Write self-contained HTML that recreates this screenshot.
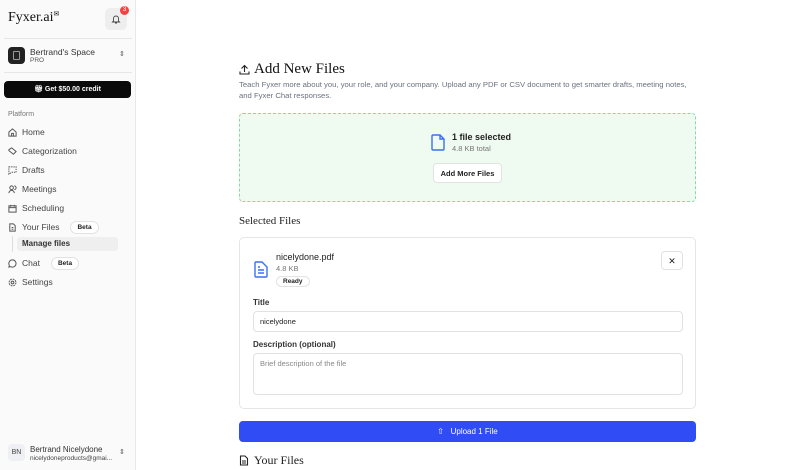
<!DOCTYPE html>
<html><head><style>
*{box-sizing:border-box;margin:0;padding:0}
body{width:800px;height:470px;overflow:hidden;font-family:"Liberation Sans",sans-serif;background:#fff;position:relative;color:#222}
.sb{position:absolute;left:0;top:0;width:136px;height:470px;background:#fafafa;border-right:1px solid #e8e8e8}
.a{position:absolute}
.nav{position:absolute;left:8px;font-size:8.5px;color:#444;display:flex;align-items:center;gap:5px;height:12px}
.nav svg{width:9px;height:9px;fill:none;stroke:#555;stroke-width:1.1}
.badge{font-size:6.5px;font-weight:bold;border:1px solid #e2e2e2;border-radius:8px;padding:2px 6px;background:#fff;color:#222;margin-left:6px}
.serif{font-family:"Liberation Serif",serif}
.lbl{font-size:8px;font-weight:bold;color:#333}
.inp{position:absolute;border:1px solid #e2e2e2;border-radius:4px;background:#fff;font-size:7.5px;padding:0 6px}
</style></head><body>
<div class="sb">
 <div class="a serif" style="left:8px;top:10px;font-size:14px;color:#111">Fyxer.ai<span style="font-size:7px;vertical-align:top">✉</span></div>
 <div class="a" style="left:105px;top:8px;width:22px;height:22px;background:#eee;border-radius:5px"></div>
 <svg class="a" style="left:111px;top:14px" width="10" height="10" viewBox="0 0 10 10"><path d="M2.5 7V4.5a2.5 2.5 0 0 1 5 0V7l1 1h-7zM4 9h2" fill="none" stroke="#444" stroke-width="0.9"/></svg>
 <div class="a" style="left:120px;top:6px;width:9px;height:9px;background:#ef4444;border-radius:50%;color:#fff;font-size:6px;text-align:center;line-height:9px">3</div>
 <div class="a" style="left:4px;top:38px;width:128px;border-top:1px solid #e6e6e6"></div>
 <div class="a" style="left:8px;top:47px;width:17px;height:17px;background:#222;border-radius:4px"></div>
 <div class="a" style="left:13px;top:51px;width:7px;height:9px;border:1px solid #999;border-radius:1px"></div>
 <div class="a" style="left:30px;top:47px;font-size:8.5px;color:#333">Bertrand's Space</div>
 <div class="a" style="left:30px;top:57px;font-size:6.5px;color:#555">PRO</div>
 <div class="a" style="left:119px;top:50px;font-size:7px;color:#555">⇕</div>
 <div class="a" style="left:4px;top:72px;width:128px;border-top:1px solid #e6e6e6"></div>
 <div class="a" style="left:4px;top:81px;width:127px;height:17px;background:#0a0a0a;border-radius:4px;color:#fff;font-size:7px;font-weight:bold;text-align:center;line-height:17px">🎁︎ Get $50.00 credit</div>
 <div class="a" style="left:8px;top:111px;font-size:7px;color:#777">Platform</div>
 <div class="nav" style="top:126px"><svg viewBox="0 0 10 10"><path d="M1 4.5L5 1l4 3.5V9H1zM4 9V6h2v3"/></svg><span>Home</span></div>
 <div class="nav" style="top:145px"><svg viewBox="0 0 10 10"><path d="M1 3l3-2 5 4-3 3-5-4z"/></svg><span>Categorization</span></div>
 <div class="nav" style="top:164px"><svg viewBox="0 0 10 10"><path d="M1 1h8v6H4L1 9z" stroke-dasharray="1.5 1"/></svg><span>Drafts</span></div>
 <div class="nav" style="top:183px"><svg viewBox="0 0 10 10"><circle cx="4" cy="3" r="2"/><path d="M1 9a3 3 0 0 1 6 0M7 1a2 2 0 0 1 0 4"/></svg><span>Meetings</span></div>
 <div class="nav" style="top:202px"><svg viewBox="0 0 10 10"><rect x="1" y="2" width="8" height="7"/><path d="M1 4h8M3 1v2M7 1v2"/></svg><span>Scheduling</span></div>
 <div class="nav" style="top:221px"><svg viewBox="0 0 10 10"><path d="M2 1h4l2 2v6H2zM4 5h2M4 7h2"/></svg><span>Your Files</span><span class="badge">Beta</span></div>
 <div class="a" style="left:12px;top:236px;height:16px;border-left:1px solid #ddd"></div>
 <div class="a" style="left:17px;top:237px;width:101px;height:14px;background:#efefef;border-radius:3px;font-size:8px;font-weight:bold;color:#333;padding-left:5px;line-height:14px">Manage files</div>
 <div class="nav" style="top:257px"><svg viewBox="0 0 10 10"><path d="M5 1a4 4 0 1 1-2 7.5L1 9l.5-2A4 4 0 0 1 5 1z"/></svg><span>Chat</span><span class="badge">Beta</span></div>
 <div class="nav" style="top:276px"><svg viewBox="0 0 10 10"><circle cx="5" cy="5" r="1.5"/><circle cx="5" cy="5" r="3.8" stroke-dasharray="2 1"/></svg><span>Settings</span></div>
 <div class="a" style="left:8px;top:444px;width:17px;height:17px;background:#eef0f4;border-radius:4px;font-size:7px;text-align:center;line-height:17px;color:#444">BN</div>
 <div class="a" style="left:30px;top:445px;font-size:8px;color:#333">Bertrand Nicelydone</div>
 <div class="a" style="left:30px;top:455px;font-size:6.5px;color:#444">nicelydoneproducts@gmai...</div>
 <div class="a" style="left:119px;top:448px;font-size:7px;color:#555">⇕</div>
</div>

<svg class="a" style="left:239px;top:64px" width="11" height="11" viewBox="0 0 11 11"><path d="M5.5 8V1.5M2.5 4.5l3-3 3 3M1 7.5V10h9V7.5" fill="none" stroke="#222" stroke-width="1.1"/></svg>
<div class="a serif" style="left:254px;top:61px;font-size:15px;color:#111">Add New Files</div>
<div class="a" style="left:239px;top:79px;width:460px;font-size:7.7px;line-height:11px;color:#6b7280">Teach Fyxer more about you, your role, and your company. Upload any PDF or CSV document to get smarter drafts, meeting notes, and Fyxer Chat responses.</div>
<div class="a" style="left:239px;top:113px;width:457px;height:89px;background:#effaf1;border:1px dashed #86dca0;border-radius:4px"></div>
<svg class="a" style="left:431px;top:134px" width="15" height="17" viewBox="0 0 15 17"><path d="M2 1h7l4 4v10a1 1 0 0 1-1 1H2a1 1 0 0 1-1-1V2a1 1 0 0 1 1-1zM9 1v4h4" fill="none" stroke="#3b6ef5" stroke-width="1.4"/></svg>
<div class="a" style="left:452px;top:132px;font-size:9px;font-weight:bold;color:#222">1 file selected</div>
<div class="a" style="left:452px;top:144px;font-size:7.5px;color:#777">4.8 KB total</div>
<div class="a" style="left:433px;top:163px;width:69px;height:20px;background:#fff;border:1px solid #e2e2e2;border-radius:4px;font-size:7.5px;font-weight:bold;text-align:center;line-height:19px">Add More Files</div>
<div class="a serif" style="left:239px;top:215px;font-size:11px;color:#222">Selected Files</div>
<div class="a" style="left:239px;top:237px;width:457px;height:172px;border:1px solid #e6e6e6;border-radius:5px"></div>
<svg class="a" style="left:254px;top:261px" width="14" height="17" viewBox="0 0 14 17"><path d="M2 1h6l5 5v9a1 1 0 0 1-1 1H2a1 1 0 0 1-1-1V2a1 1 0 0 1 1-1zM4 9h6M4 12h6M4 6h2" fill="none" stroke="#3b6ef5" stroke-width="1.4"/></svg>
<div class="a" style="left:276px;top:252px;font-size:9px;color:#222">nicelydone.pdf</div>
<div class="a" style="left:276px;top:264px;font-size:7.5px;color:#777">4.8 KB</div>
<div class="a" style="left:276px;top:276px;padding:1px 6px;border:1px solid #e2e2e2;border-radius:7px;font-size:6.5px;font-weight:bold">Ready</div>
<div class="a" style="left:661px;top:251px;width:22px;height:19px;border:1px solid #e2e2e2;border-radius:4px;text-align:center;line-height:18px;font-size:9px">✕</div>
<div class="a lbl" style="left:253px;top:298px">Title</div>
<div class="inp" style="left:253px;top:311px;width:430px;height:21px;line-height:20px;color:#222">nicelydone</div>
<div class="a lbl" style="left:253px;top:340px">Description (optional)</div>
<div class="inp" style="left:253px;top:353px;width:430px;height:42px;padding-top:5px;color:#888">Brief description of the file</div>
<div class="a" style="left:239px;top:421px;width:457px;height:21px;background:#2f4cf5;border-radius:4px;color:#fff;font-size:8px;text-align:center;line-height:21px">⇧&nbsp;&nbsp; Upload 1 File</div>
<svg class="a" style="left:239px;top:455px" width="10" height="11" viewBox="0 0 10 11"><path d="M1.5 1h4.5l2.5 2.5V10h-7zM3 6h4M3 8h4" fill="none" stroke="#222" stroke-width="1.1"/></svg>
<div class="a serif" style="left:254px;top:453px;font-size:12px;color:#222">Your Files</div>
</body></html>
